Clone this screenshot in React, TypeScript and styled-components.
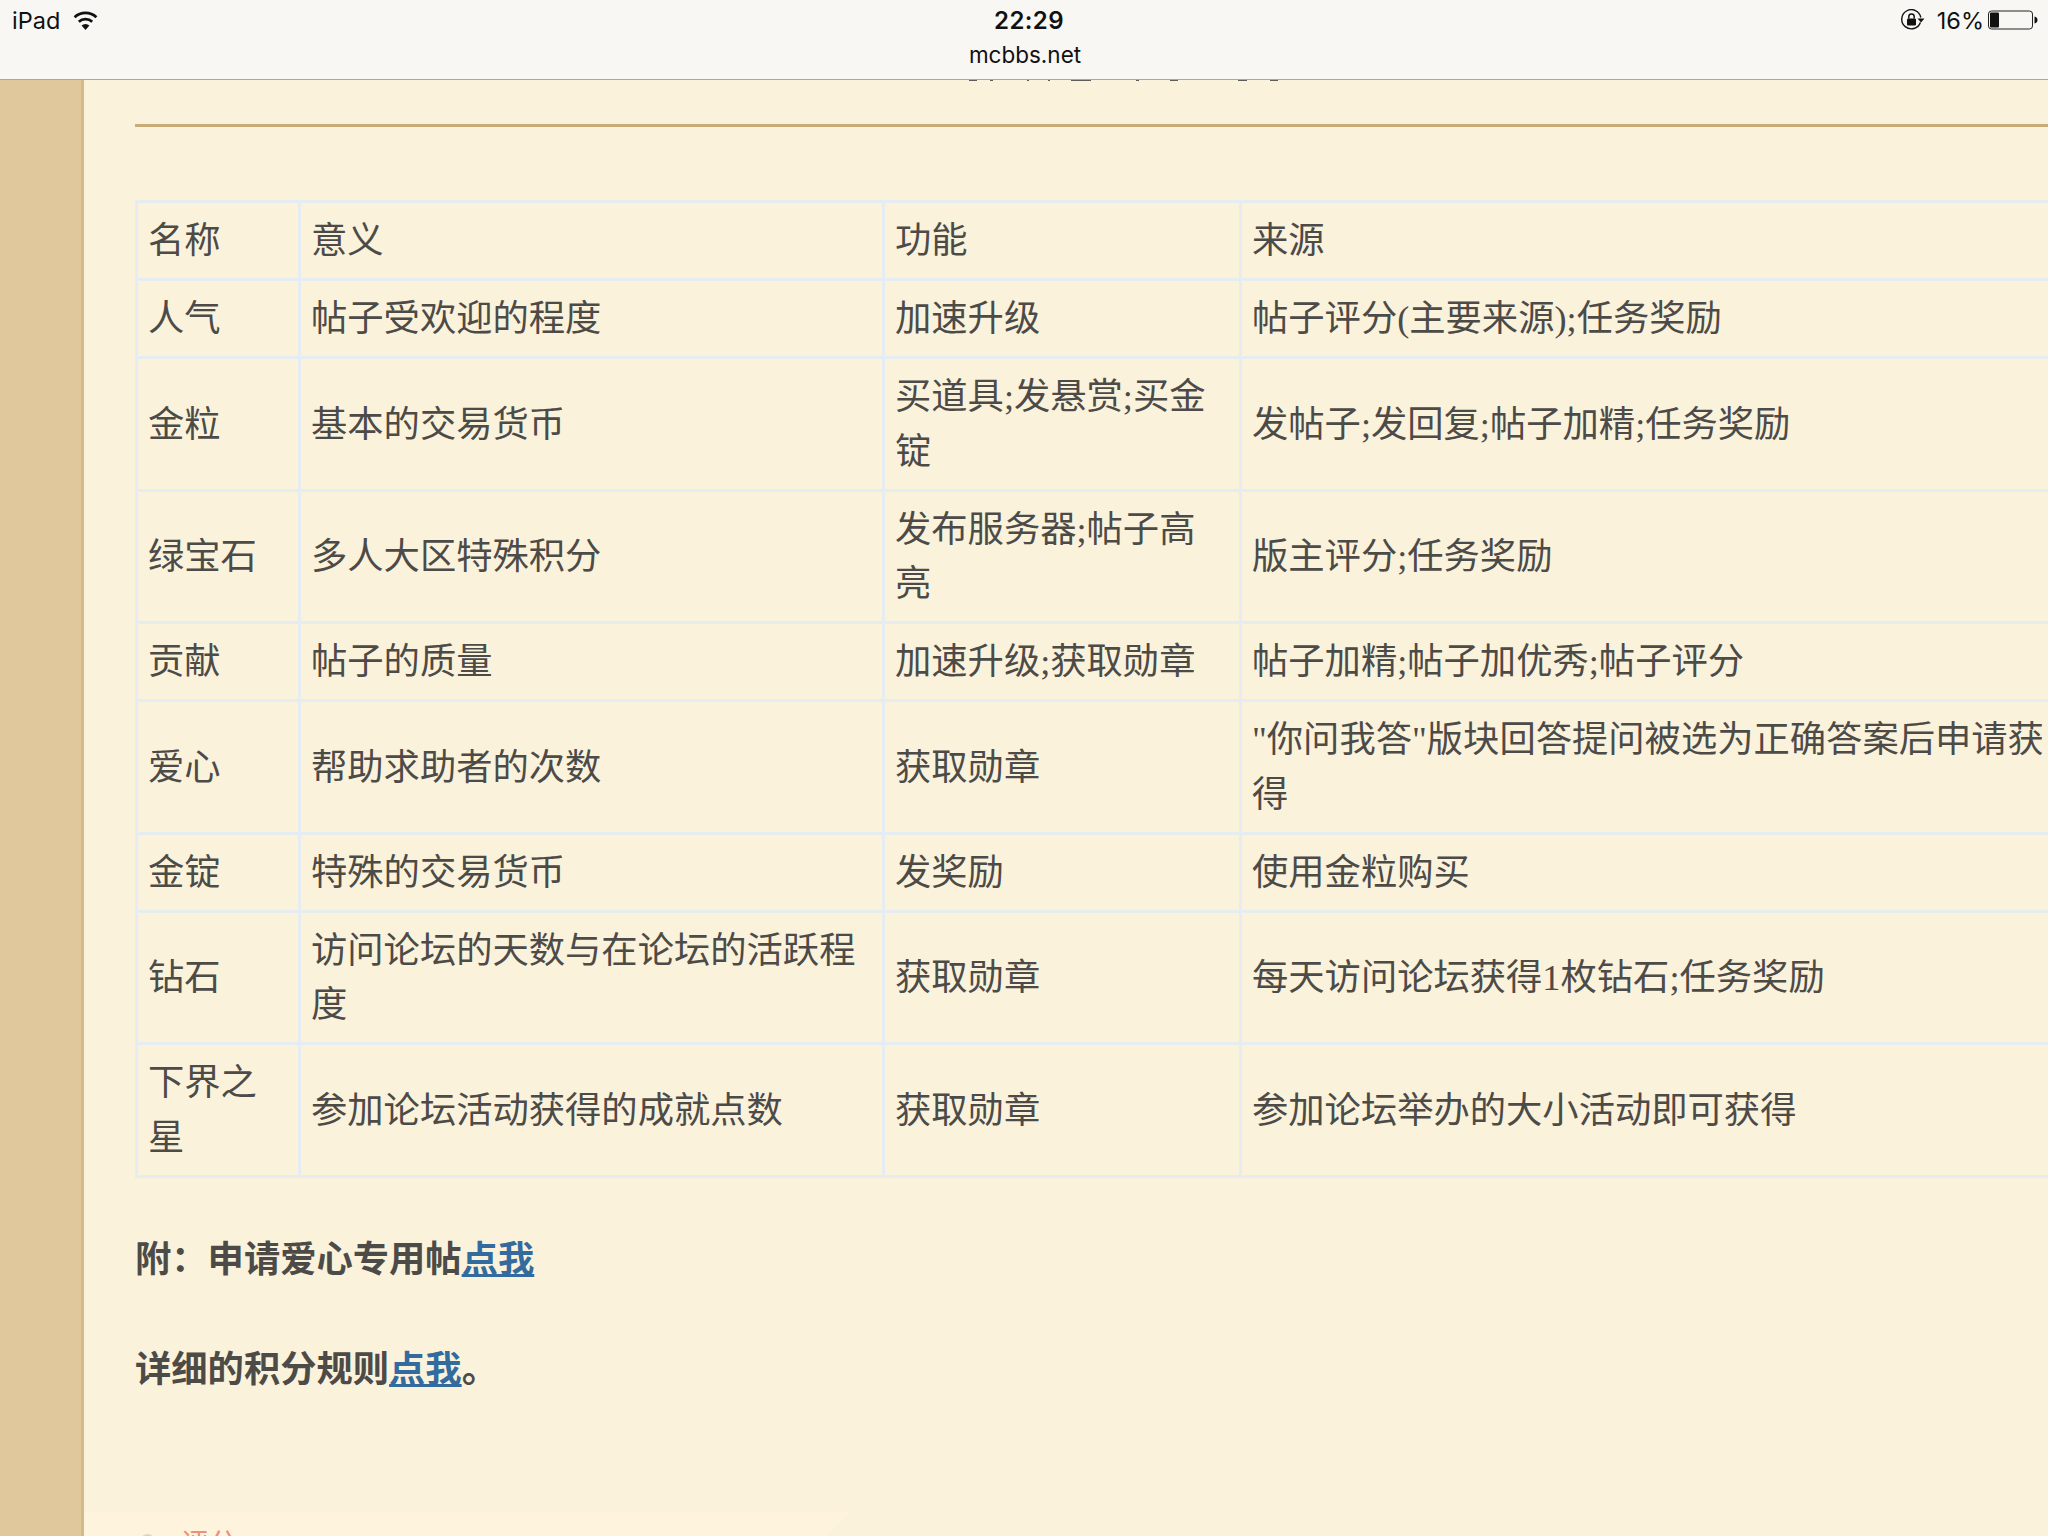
import React from "react";
import styled, { createGlobalStyle } from "styled-components";

const GlobalStyle = createGlobalStyle`
  html, body {
    margin: 0;
    padding: 0;
    width: 2048px;
    height: 1536px;
    overflow: hidden;
    background: #fbf2dc;
  }
  body {
    font-family: "Liberation Serif", "Noto Sans CJK SC", sans-serif;
  }
`;

const Screen = styled.div`
  width: 2048px;
  height: 1536px;
  display: flex;
  flex-direction: column;
  overflow: hidden;
`;

const TopBar = styled.header`
  height: 79px;
  flex: none;
  background: #f8f7f3;
  border-bottom: 1px solid #aba99f;
  display: grid;
  grid-template-columns: 1fr auto 1fr;
  padding: 0 10px 0 12px;
  font-family: "Inter", "Liberation Sans", sans-serif;
  color: #111;
`;

const StatusLeft = styled.div`
  display: flex;
  align-items: center;
  gap: 13px;
  height: 40px;
  font-size: 23.5px;
`;

const StatusRight = styled(StatusLeft)`
  justify-content: flex-end;
  gap: 0;
`;

const Percent = styled.span`
  margin: 0 4px 0 12px;
`;

const Center = styled.div`
  display: flex;
  flex-direction: column;
  align-items: center;
  padding-left: 8px;
`;

const Clock = styled.div`
  height: 40px;
  line-height: 41px;
  font-size: 24px;
  font-weight: 600;
  letter-spacing: 0.4px;
`;

const Host = styled.div`
  font-size: 22.5px;
  line-height: 28px;
  margin-top: 1px;
  margin-left: -8px;
`;

const Body = styled.div`
  flex: 1;
  display: flex;
  min-height: 0;
`;

const SideRail = styled.aside`
  width: 81px;
  flex: none;
  background: #e0c89c;
  border-right: 3px solid #d3ba8c;
`;

const Post = styled.main`
  position: relative;
  flex: 1;
  padding: 44px 0 0 51px;
  min-width: 0;
  overflow: hidden;
  display: flex;
  flex-direction: column;
  color: #4c4b48;
`;

/* bottoms of the scrolled-away heading, just showing under the bar */
const HeadingScrap = styled.svg`
  position: absolute;
  left: 885px;
  top: -1px;
`;

const Rule = styled.div`
  height: 3px;
  flex: none;
  background: #c9ab78;
`;

const Sheet = styled.table`
  margin-top: 73px;
  width: 1940px;
  table-layout: fixed;
  border-collapse: collapse;
  flex: none;
  font-size: 36.3px;
  line-height: 54.2px;
`;

const Cell = styled.td`
  border: 3px solid #e5edf2;
  padding: 11px 10px 10px 10px;
  vertical-align: middle;
`;

const Note = styled.p<{ $gap: number }>`
  margin: ${(p) => p.$gap}px 0 0;
  font-size: 36.3px;
  line-height: 54px;
  font-weight: 700;
  color: #4c4b48;
`;

const NoteLink = styled.a`
  color: #336b9f;
  text-decoration: underline;
`;

const Footer = styled.div`
  margin: auto 0 0 -51px;
  height: 24px;
  width: 766px;
  flex: none;
  box-sizing: border-box;
  padding: 19px 0 0 56px;
  display: flex;
  gap: 26px;
  overflow: hidden;
  background: #fef4de;
  clip-path: polygon(0 0, 100% 0, 97% 100%, 0 100%);
  font-size: 28px;
  line-height: 28px;
  color: #ee8f78;
`;

const FooterDot = styled.span`
  width: 15px;
  height: 15px;
  margin-top: 3px;
  border-radius: 50%;
  background: #e2d3c0;
`;

const rows: string[][] = [
  ["名称", "意义", "功能", "来源"],
  ["人气", "帖子受欢迎的程度", "加速升级", "帖子评分(主要来源);任务奖励"],
  ["金粒", "基本的交易货币", "买道具;发悬赏;买金锭", "发帖子;发回复;帖子加精;任务奖励"],
  ["绿宝石", "多人大区特殊积分", "发布服务器;帖子高亮", "版主评分;任务奖励"],
  ["贡献", "帖子的质量", "加速升级;获取勋章", "帖子加精;帖子加优秀;帖子评分"],
  ["爱心", "帮助求助者的次数", "获取勋章", "\"你问我答\"版块回答提问被选为正确答案后申请获得"],
  ["金锭", "特殊的交易货币", "发奖励", "使用金粒购买"],
  ["钻石", "访问论坛的天数与在论坛的活跃程度", "获取勋章", "每天访问论坛获得1枚钻石;任务奖励"],
  ["下界之星", "参加论坛活动获得的成就点数", "获取勋章", "参加论坛举办的大小活动即可获得"],
];

const scrapMarks = [
  [0, 8],
  [21, 3],
  [58, 2],
  [79, 2],
  [102, 20],
  [167, 3],
  [201, 8],
  [269, 9],
  [301, 8],
];

const WifiIcon = () => (
  <svg width="25" height="19" viewBox="0 0 25 19">
    <path d="M12.5 19 8.6 14.6a5.6 5.6 0 0 1 7.8 0Z" fill="#111" />
    <path d="M5.8 10.8a9.8 9.8 0 0 1 13.4 0" fill="none" stroke="#111" strokeWidth="2.8" />
    <path d="M1.6 6.2a16 16 0 0 1 21.8 0" fill="none" stroke="#111" strokeWidth="2.8" />
  </svg>
);

const RotationLockIcon = () => (
  <svg width="24" height="22" viewBox="0 0 24 22">
    <path d="M19.4 13.5A9.6 9.6 0 1 1 19.8 8.5" fill="none" stroke="#111" strokeWidth="1.4" />
    <path d="M16.5 9.5h7L20 13.5Z" fill="#111" />
    <rect x="6" y="9.5" width="9" height="7" rx="1" fill="#111" />
    <path d="M7.8 9.5V7.6a2.7 2.7 0 0 1 5.4 0v1.9" fill="none" stroke="#111" strokeWidth="1.5" />
  </svg>
);

const BatteryIcon = () => (
  <svg width="50" height="20" viewBox="0 0 50 20">
    <rect x="0.5" y="1" width="44" height="18" rx="3" fill="none" stroke="#222" strokeWidth="1" />
    <rect x="2" y="2.5" width="9" height="15" rx="1" fill="#111" />
    <path d="M46.5 6.5c2 .3 3 1.7 3 3.5s-1 3.2-3 3.5Z" fill="#111" />
  </svg>
);

export default function App() {
  return (
    <Screen>
      <GlobalStyle />
      <TopBar>
        <StatusLeft>
          <span>iPad</span>
          <WifiIcon />
        </StatusLeft>
        <Center>
          <Clock>22:29</Clock>
          <Host>mcbbs.net</Host>
        </Center>
        <StatusRight>
          <RotationLockIcon />
          <Percent>16%</Percent>
          <BatteryIcon />
        </StatusRight>
      </TopBar>
      <Body>
        <SideRail />
        <Post>
          <HeadingScrap width="310" height="3" viewBox="0 0 310 3">
            {scrapMarks.map(([x, w]) => (
              <rect key={x} x={x} y="0" width={w} height="2" fill="#5f5d58" />
            ))}
          </HeadingScrap>
          <Rule />
          <Sheet>
            <colgroup>
              <col style={{ width: 163 }} />
              <col style={{ width: 584 }} />
              <col style={{ width: 357 }} />
              <col />
            </colgroup>
            <tbody>
              {rows.map((row) => (
                <tr key={row[0]}>
                  {row.map((text, i) => (
                    <Cell key={i}>{text}</Cell>
                  ))}
                </tr>
              ))}
            </tbody>
          </Sheet>
          <Note $gap={55}>
            附：申请爱心专用帖<NoteLink>点我</NoteLink>
          </Note>
          <Note $gap={56}>
            详细的积分规则<NoteLink>点我</NoteLink>。
          </Note>
          <Footer>
            <FooterDot />
            <span>评分</span>
          </Footer>
        </Post>
      </Body>
    </Screen>
  );
}
